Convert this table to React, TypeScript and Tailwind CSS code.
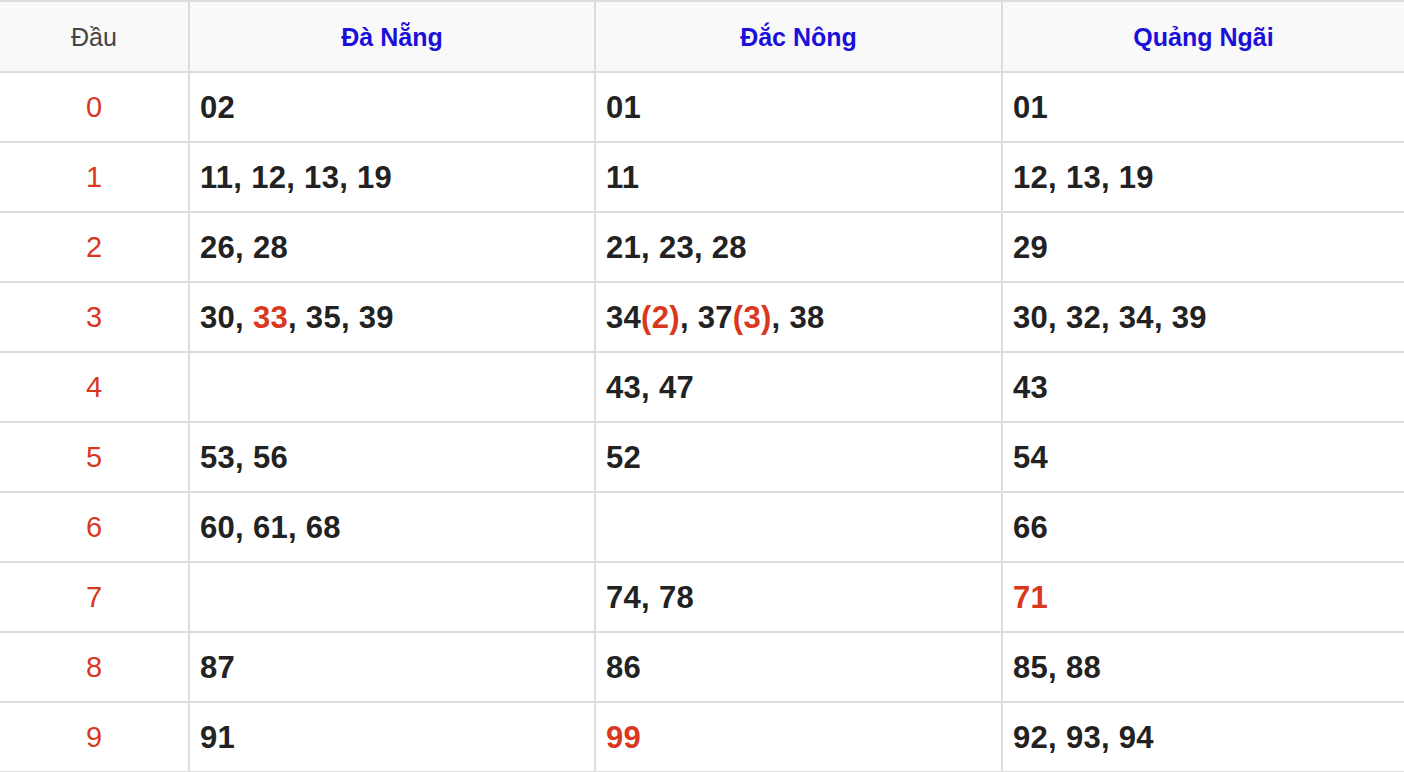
type Part = { t: string; hot?: boolean };

const HEADS = ["Đà Nẵng", "Đắc Nông", "Quảng Ngãi"];

// mỗi hàng: đầu số, rồi 3 tỉnh
const ROWS: Part[][][] = [
  [[{ t: "02" }], [{ t: "01" }], [{ t: "01" }]],
  [[{ t: "11, 12, 13, 19" }], [{ t: "11" }], [{ t: "12, 13, 19" }]],
  [[{ t: "26, 28" }], [{ t: "21, 23, 28" }], [{ t: "29" }]],
  [
    [{ t: "30, " }, { t: "33", hot: true }, { t: ", 35, 39" }],
    [{ t: "34" }, { t: "(2)", hot: true }, { t: ", 37" }, { t: "(3)", hot: true }, { t: ", 38" }],
    [{ t: "30, 32, 34, 39" }],
  ],
  [[], [{ t: "43, 47" }], [{ t: "43" }]],
  [[{ t: "53, 56" }], [{ t: "52" }], [{ t: "54" }]],
  [[{ t: "60, 61, 68" }], [], [{ t: "66" }]],
  [[], [{ t: "74, 78" }], [{ t: "71", hot: true }]],
  [[{ t: "87" }], [{ t: "86" }], [{ t: "85, 88" }]],
  [[{ t: "91" }], [{ t: "99", hot: true }], [{ t: "92, 93, 94" }]],
];

const grid = "grid grid-cols-[190px_406px_407px_1fr]";

export default function App() {
  return (
    <div
      className="min-h-screen bg-white overflow-hidden"
      style={{ fontFamily: '"Liberation Sans", Arial, sans-serif' }}
    >
      <div className={`${grid} border-t-2 border-[#dddddd] bg-[#f9f9f9]`}>
        <div className="h-[71px] flex items-center justify-center pt-[2px] border-r-2 border-b-2 border-[#dddddd] text-[25px] text-[#444444]">
          Đầu
        </div>
        {HEADS.map((h, i) => (
          <div
            key={h}
            className={`h-[71px] flex items-center justify-center pt-[2px] border-b-2 border-[#dddddd] text-[25px] font-bold text-[#1b10d8] ${
              i < 2 ? "border-r-2" : ""
            }`}
          >
            {h}
          </div>
        ))}
      </div>

      {ROWS.map((row, r) => (
        <div key={r} className={grid}>
          <div className="h-[70px] flex items-center justify-center pt-[2px] border-r-2 border-b-2 border-[#dddddd] text-[29px] text-[#d9381e]">
            {r}
          </div>
          {row.map((cell, c) => (
            <div
              key={c}
              className={`h-[70px] flex items-center pl-[10px] pt-[2px] border-b-2 border-[#dddddd] text-[31px] font-bold tracking-[0.3px] text-[#222222] ${
                c < 2 ? "border-r-2" : ""
              }`}
            >
              <span className="whitespace-pre">
                {cell.map((p, k) => (
                  <span key={k} className={p.hot ? "text-[#d9381e]" : ""}>
                    {p.t}
                  </span>
                ))}
              </span>
            </div>
          ))}
        </div>
      ))}
    </div>
  );
}
